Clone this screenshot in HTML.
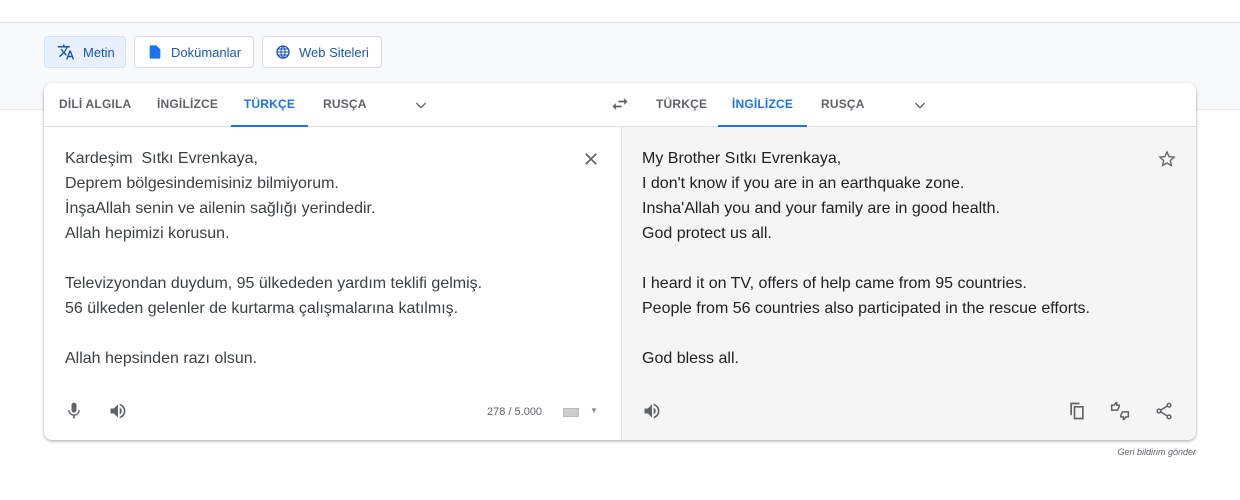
<!DOCTYPE html>
<html><head><meta charset="utf-8"><style>
*{box-sizing:border-box;margin:0;padding:0}
body{width:1240px;height:500px;background:#fff;font-family:"Liberation Sans",Arial,sans-serif;position:relative;overflow:hidden}
.band{position:absolute;left:0;top:22px;width:1240px;height:88px;background:#f8f9fa;border-top:1px solid #e0e0e0;border-bottom:1px solid #e8e8e8}
.btn{position:absolute;top:36px;height:32px;border:1px solid #dadce0;border-radius:4px;background:#fff;font-size:13px;color:#1a56b5;display:flex;align-items:center;padding-left:12px;gap:8px}
.btn.act{background:#e8f0fe;border-color:#d2e3fc}
.card{position:absolute;left:44px;top:83px;width:1152px;height:357px;background:#fff;border-radius:8px;box-shadow:0 1px 3px rgba(60,64,67,.35),0 1px 2px rgba(60,64,67,.15);overflow:hidden}
.hdr{position:absolute;left:0;top:0;width:1152px;height:44px;border-bottom:1px solid #e0e0e0;background:#fff}
.tab{position:absolute;top:0;height:44px;line-height:42px;font-size:12px;font-weight:bold;color:#5f6368;letter-spacing:.2px}
.tab.on{color:#1a73e8;border-bottom:2px solid #1a73e8;text-align:center}
.right{position:absolute;left:577px;top:44px;width:575px;height:313px;background:#f5f5f5;border-left:1px solid #e0e0e0}
.txt{position:absolute;top:63px;font-size:16px;line-height:25px;white-space:pre}
</style></head><body>
<div class="band"></div>
<div class="btn act" style="left:44px;width:82px"><svg width="18" height="18" viewBox="0 0 24 24"><path fill="#1a56b5" d="M12.87 15.07l-2.54-2.51.03-.03A17.52 17.52 0 0014.07 6H17V4h-7V2H8v2H1v2h11.17C11.5 7.92 10.440 9.75 9 11.35 8.07 10.32 7.3 9.19 6.69 8h-2c.73 1.63 1.73 3.17 2.98 4.56l-5.09 5.02L4 19l5-5 3.11 3.11.76-2.04zM18.5 10h-2L12 22h2l1.12-3h4.75L21 22h2l-4.5-12zm-2.62 7l1.62-4.330L19.12 17h-3.24z"/></svg>Metin</div>
<div class="btn" style="left:134px;width:120px"><svg width="16" height="16" viewBox="0 0 24 24"><path fill="#1a73e8" d="M14 2H6c-1.1 0-2 .9-2 2v16c0 1.1.9 2 2 2h12c1.1 0 2-.9 2-2V8l-6-6z"/></svg>Dokümanlar</div>
<div class="btn" style="left:262px;width:120px"><svg width="16" height="16" viewBox="0 0 24 24"><circle cx="12" cy="12" r="9" fill="none" stroke="#1a56b5" stroke-width="2"/><path d="M3 12h18M12 3c-4 4.5-4 13.5 0 18M12 3c4 4.5 4 13.5 0 18M4.5 7.5h15M4.5 16.5h15" fill="none" stroke="#1a56b5" stroke-width="1.6"/></svg>Web Siteleri</div>
<div class="card">
<div class="hdr">
<div class="tab" style="left:15px">DİLİ ALGILA</div>
<div class="tab" style="left:113px">İNGİLİZCE</div>
<div class="tab on" style="left:187px;width:77px">TÜRKÇE</div>
<div class="tab" style="left:279px">RUSÇA</div>
<svg style="position:absolute;left:369px;top:14px" width="16" height="16" viewBox="0 0 24 24"><path d="M5 9l7 7 7-7" fill="none" stroke="#5f6368" stroke-width="2"/></svg>
<svg style="position:absolute;left:566px;top:11px" width="20" height="20" viewBox="0 0 24 24"><path fill="#5f6368" d="M6.99 11L3 15l3.99 4v-3H14v-2H6.99v-3zM21 9l-3.99-4v3H10v2h7.01v3L21 9z"/></svg>
<div class="tab" style="left:612px">TÜRKÇE</div>
<div class="tab on" style="left:674px;width:89px">İNGİLİZCE</div>
<div class="tab" style="left:777px">RUSÇA</div>
<svg style="position:absolute;left:868px;top:14px" width="16" height="16" viewBox="0 0 24 24"><path d="M5 9l7 7 7-7" fill="none" stroke="#5f6368" stroke-width="2"/></svg>
</div>
<div class="txt" style="left:21px;color:#3c4043">Kardeşim  Sıtkı Evrenkaya,
Deprem bölgesindemisiniz bilmiyorum.
İnşaAllah senin ve ailenin sağlığı yerindedir.
Allah hepimizi korusun.

Televizyondan duydum, 95 ülkededen yardım teklifi gelmiş.
56 ülkeden gelenler de kurtarma çalışmalarına katılmış.

Allah hepsinden razı olsun.</div>
<svg style="position:absolute;left:538px;top:67px" width="18" height="18" viewBox="0 0 24 24"><path d="M5 5l14 14M19 5L5 19" stroke="#5f6368" stroke-width="2.2"/></svg>
<svg style="position:absolute;left:20px;top:318px" width="20" height="20" viewBox="0 0 24 24"><path fill="#5f6368" d="M12 14c1.66 0 3-1.34 3-3V5c0-1.66-1.34-3-3-3S9 3.34 9 5v6c0 1.66 1.34 3 3 3zm5.3-3c0 3-2.54 5.1-5.3 5.1S6.7 14 6.7 11H5c0 3.41 2.72 6.23 6 6.72V21h2v-3.28c3.28-.48 6-3.3 6-6.72h-1.7z"/></svg>
<svg style="position:absolute;left:64px;top:318px" width="20" height="20" viewBox="0 0 24 24"><path fill="#5f6368" d="M3 9v6h4l5 5V4L7 9H3zm13.5 3A4.5 4.5 0 0014 8v8a4.47 4.47 0 002.5-4zM14 3.23v2.06c2.89.86 5 3.54 5 6.71s-2.11 5.85-5 6.71v2.06c4.010-.91 7-4.49 7-8.77s-2.99-7.86-7-8.77z"/></svg>
<div style="position:absolute;left:443px;top:323px;font-size:11px;color:#5f6368">278 / 5.000</div>
<div style="position:absolute;left:519px;top:325px;width:16px;height:9px;background:#ccc;border:1px solid #bbb"></div>
<div style="position:absolute;left:546px;top:323px;font-size:8px;color:#888">▼</div>
<div class="right">
<div class="txt" style="left:20px;top:19px;color:#202124">My Brother Sıtkı Evrenkaya,
I don't know if you are in an earthquake zone.
Insha'Allah you and your family are in good health.
God protect us all.

I heard it on TV, offers of help came from 95 countries.
People from 56 countries also participated in the rescue efforts.

God bless all.</div>
<svg style="position:absolute;left:535px;top:22px" width="20" height="20" viewBox="0 0 24 24"><path d="M12 3.5l2.5 5.6 6.1.6-4.6 4.1 1.3 6L12 16.7 6.7 19.8l1.3-6-4.6-4.1 6.1-.6z" fill="none" stroke="#5f6368" stroke-width="1.6"/></svg>
<svg style="position:absolute;left:20px;top:274px" width="20" height="20" viewBox="0 0 24 24"><path fill="#5f6368" d="M3 9v6h4l5 5V4L7 9H3zm13.5 3A4.5 4.5 0 0014 8v8a4.47 4.47 0 002.5-4zM14 3.23v2.06c2.89.86 5 3.54 5 6.71s-2.11 5.85-5 6.71v2.06c4.01-.91 7-4.49 7-8.77s-2.99-7.86-7-8.77z"/></svg>
<svg style="position:absolute;left:445px;top:274px" width="20" height="20" viewBox="0 0 24 24"><path fill="none" stroke="#5f6368" stroke-width="2" d="M9 7h10v14H9zM5 17V3h10"/></svg>
<svg style="position:absolute;left:487px;top:274px" width="22" height="20" viewBox="0 0 24 24"><path fill="none" stroke="#5f6368" stroke-width="1.8" d="M2 11V5h3l2-3h1v3h3v2l-2 4zM22 13v6h-3l-2 3h-1v-3h-3v-2l2-4z"/></svg>
<svg style="position:absolute;left:532px;top:274px" width="20" height="20" viewBox="0 0 24 24"><circle cx="18" cy="5" r="2.2" fill="none" stroke="#5f6368" stroke-width="1.8"/><circle cx="6" cy="12" r="2.2" fill="none" stroke="#5f6368" stroke-width="1.8"/><circle cx="18" cy="19" r="2.2" fill="none" stroke="#5f6368" stroke-width="1.8"/><path d="M8 11l8-5M8 13l8 5" stroke="#5f6368" stroke-width="1.8"/></svg>
</div>
</div>
<div style="position:absolute;right:44px;top:447px;font-size:9px;font-style:italic;color:#5f6368">Geri bildirim gönder</div>
</body></html>
